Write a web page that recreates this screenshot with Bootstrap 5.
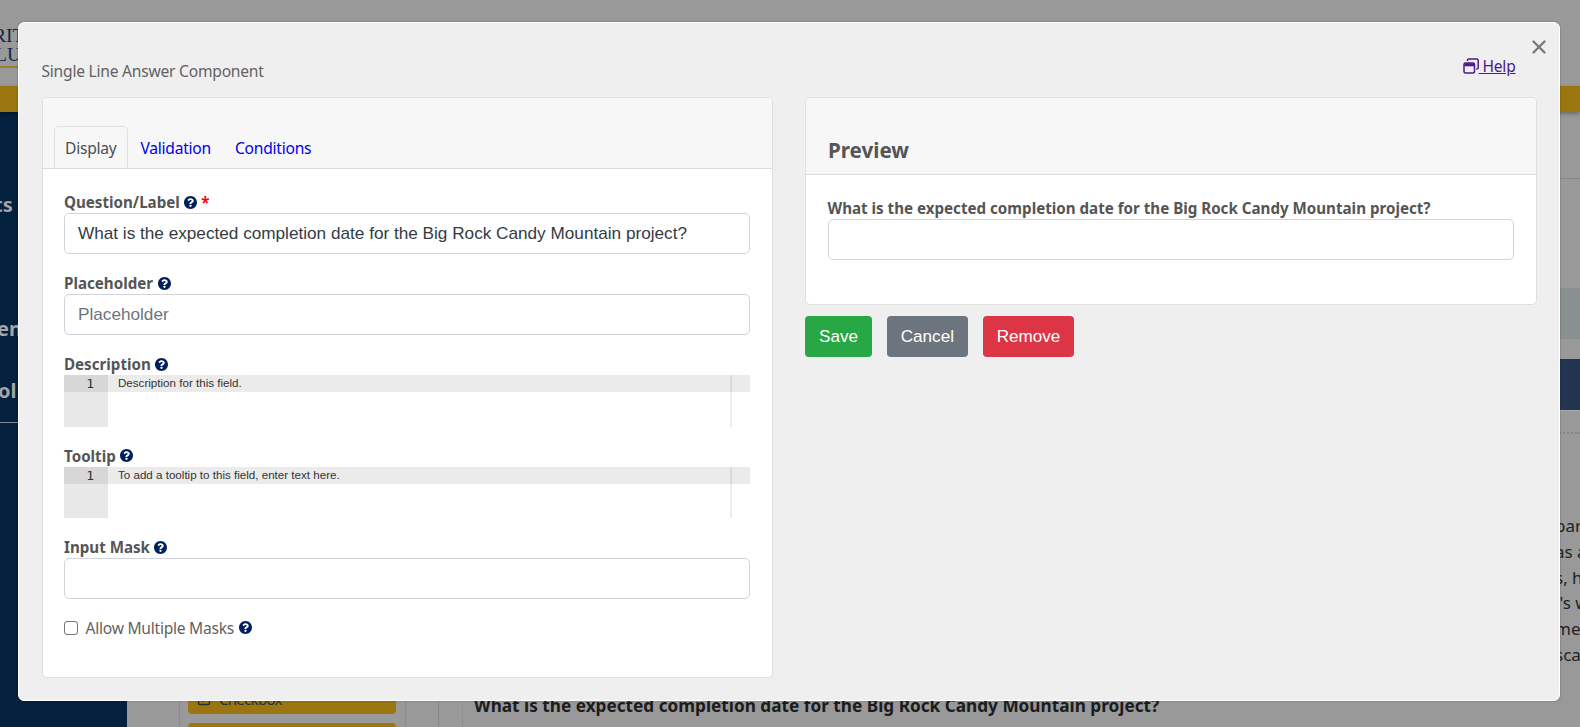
<!DOCTYPE html>
<html lang="en">
<head>
<meta charset="utf-8">
<meta name="viewport" content="width=device-width, initial-scale=1">
<title>Single Line Answer Component</title>
<link href="https://cdn.jsdelivr.net/npm/bootstrap@5.3.0/dist/css/bootstrap.min.css" rel="stylesheet">
<style>
body{font-family:"Noto Sans",sans-serif;font-size:15.15px;color:#555;background:#999;height:727px;overflow:hidden}
/* dimmed page behind the dialog */
.page-back{height:727px;overflow:hidden}
.brand-strip{height:86px;padding-top:27px}
.brand-text{width:60px;font:19.500px/18.500px "Liberation Serif",serif;color:#10234c;border-bottom:2px solid #a07c2c;height:41px;white-space:nowrap}
.gold-bar{height:26px;background:#9a7510;position:relative;box-shadow:0 2px 4px rgba(0,0,0,.3)}
.side-menu{width:127px;background:#04203f;color:#a3a5a8;font-weight:700;font-size:20px;line-height:28px;padding-top:79px;flex:none}
.side-menu div{white-space:nowrap}
.side-menu hr{margin:17px 0 0;border-color:#a3a5a8;opacity:.8}
.palette{width:227px;margin-left:52px;border:1px solid #8b8b8b;border-top:0;border-bottom:0;padding:562px 9px 0 8px;flex:none}
.palette-btn{height:40px;background:#9a7510;border-radius:4px;color:#26303b;font-size:15px;letter-spacing:-.7px;margin-bottom:9px;padding:10px 0 0 9px}
.form-canvas{border-left:1px solid #858585;margin-left:32px}
.drop-zone{margin-left:23px;border-left:1px dotted #858585;width:1080px;padding-top:582px;padding-left:11px;height:615px}
.drop-title{font-size:17.220px;font-weight:700;line-height:24px;color:#1c1c1c;white-space:nowrap}
.far-col{width:24px;flex:none;color:#222;white-space:nowrap;overflow:hidden}
.far-top{height:67px;border-bottom:1px solid #878787}
.far-grey{height:51px;margin-top:109px;background:#8a8f8f}
.far-navy{height:52px;margin-top:20px;background:#22344f;border-bottom:1px solid #aaa}
.far-dots{margin-top:21px;border-top:2px dotted #858585}
.far-text{margin-top:79px;font-size:17px;line-height:25.8px}
.far-text div{margin-left:-1px}
/* dialog */
.dialog-layer{position:absolute;inset:0;padding:22px 20px 26px 18px}
.dialog-box{height:679px;background:#efefef;border:1px solid #fff;border-radius:6px;box-shadow:0 0 2px rgba(0,0,0,.35);padding:0 22.500px 0 22.500px;position:relative}
.dialog-head{height:74px;padding-top:37px}
.dialog-title{color:#626262;font-size:15.600px;letter-spacing:-.23px}
.help-a{color:#4b1a8c;text-decoration:underline;margin-right:21px;margin-top:-5px;white-space:pre;font-size:15.600px;letter-spacing:-.25px}
.help-a svg{vertical-align:-2px}
.close-x{position:absolute;right:13px;top:17px;line-height:0;background:none;border:0;padding:0}
.panes{display:grid;grid-template-columns:731px 1fr;gap:32.500px;align-items:start}
.pane{border:1px solid #dfdfdf;border-radius:5px;background:#fff;overflow:hidden}
.pane-left{height:581px}
.pane-right{height:208px}
.pane-top{background:#f7f7f7;border-bottom:1px solid #dcdcdc}
.pane-left .pane-top{height:71px;padding:28px 11px 0}
.pane-right .pane-top{height:77px;padding:36px 22px 0;font-size:20.600px;font-weight:700;line-height:32px}
.tabs .nav-link{color:#0000ee;padding:0 11px;height:42px;line-height:42px;border:1px solid transparent;border-bottom:0;border-radius:5px 5px 0 0;font-size:15.600px;letter-spacing:-.24px}
.tabs .nav-link.active{color:#495057;background:#f7f7f7;border-color:#dee2e6;padding:0 10.900px 0 10.500px}
.pane-fill{padding:20px 22px 0 21.500px}
.fld{margin-bottom:16.100px}
.fld-lab{display:block;font-weight:700;line-height:26px;height:24px;white-space:nowrap}
.q{vertical-align:-1.500px;margin-left:4.500px;position:relative;top:-1px}
.req{color:#f00;margin-left:4px}
.fld .form-control,.form-control.solo{height:41px;font:17.180px "Liberation Sans",sans-serif;padding:0 13px;border:1px solid #ced4da;border-radius:5px;color:#333b42;background:#fff}
.fld .form-control::placeholder{color:#6c757d}
.editor{height:51.400px;display:grid;grid-template-columns:44px 1fr;background:#fff;position:relative}
.editor-gut{background:#e8e8e8}
.editor-num{height:17px;background:#d7d7d7;font:13px/17px "DejaVu Sans Mono",monospace;color:#333;text-align:right;padding-right:14px}
.editor-row{height:17px;background:#ebebeb;font:11.600px/16px "Liberation Sans",sans-serif;color:#333;padding-left:10px}
.editor::after{content:"";position:absolute;right:18px;top:0;bottom:0;width:2px;background:rgba(0,0,0,.07)}
.chk{width:14px;height:14px;border:1px solid #767676;border-radius:3px;background:#fff;margin-right:7.500px}
.chk-line{color:#626262;height:26px;font-size:15.600px;letter-spacing:-.25px}
.acts{gap:14.500px;margin-top:11px}
.act{font:17.100px/41px "Liberation Sans",sans-serif;height:41px;border:0;border-radius:4px;padding:0 14.100px;color:#fff}
.act-save{background:#28a745}.act-cancel{background:#6c757d}.act-remove{background:#dc3545}
</style>
</head>
<body>
<svg width="0" height="0" class="position-absolute"><defs>
<symbol id="qm" viewBox="8 8 496 496"><path fill="#00205b" d="M504 256c0 137-111 248-248 248S8 393 8 256 119 8 256 8s248 111 248 248zM262.700 90c-54.500 0-89.300 23-116.500 63.800-3.500 5.300-2.400 12.400 2.700 16.300l34.700 26.300c5.200 3.900 12.600 3 16.700-2.100 17.900-22.700 30.100-35.800 57.300-35.800 20.400 0 45.700 13.100 45.700 33 0 15-12.400 22.700-32.500 34C247.100 238.500 216 254.900 216 296v4c0 6.600 5.400 12 12 12h56c6.600 0 12-5.400 12-12v-1.300c0-28.500 83.200-29.600 83.200-106.700 0-58-60.200-102-116.500-102zM256 338c-25.400 0-46 20.600-46 46s20.600 46 46 46 46-20.600 46-46-20.600-46-46-46z"/></symbol>
</defs></svg>

<div class="page-back">
  <header class="brand-strip"><div class="brand-text"><div style="margin-left:-7px">RIT</div><div style="margin-left:-5px">LU</div></div></header>
  <div class="gold-bar"></div>
  <div class="d-flex" style="height:615px">
    <nav class="side-menu">
      <div style="margin-left:-6px">ts</div>
      <div style="margin:96px 0 0 -3px">en</div>
      <div style="margin:34px 0 0 -2px">ol</div>
      <hr>
    </nav>
    <div class="palette">
      <div class="palette-btn d-flex align-items-center"><svg width="14" height="14" viewBox="0 0 14 14" class="me-2"><rect x="1.500" y="1.500" width="11" height="11" rx="1.500" fill="none" stroke="#26303b" stroke-width="1.500"/><path d="M4 7l2.200 2.200L10 5" fill="none" stroke="#26303b" stroke-width="1.500"/></svg>Checkbox</div>
      <div class="palette-btn"></div>
    </div>
    <div class="form-canvas flex-grow-1">
      <div class="drop-zone"><div class="drop-title">What is the expected completion date for the Big Rock Candy Mountain project?</div></div>
    </div>
    <div class="far-col">
      <div class="far-top"></div><div class="far-grey"></div><div class="far-navy"></div><div class="far-dots"></div>
      <div class="far-text"><div>par</div><div>as a</div><div>s, h</div><div>&nbsp;'s w</div><div>me</div><div>sca</div></div>
    </div>
  </div>
</div>

<div class="dialog-layer">
  <div class="dialog-box" role="dialog">
    <button class="close-x" aria-label="Close"><svg width="14" height="14" viewBox="0 0 14 14"><path d="M1.500 1.500l11 11M12.500 1.500l-11 11" stroke="#777" stroke-width="2.300" stroke-linecap="round"/></svg></button>
    <div class="dialog-head d-flex justify-content-between align-items-start">
      <span class="dialog-title">Single Line Answer Component</span>
      <a class="help-a" href="#"><svg width="16" height="16" viewBox="0 0 16 16" fill="none" stroke="#4b1a8c" stroke-width="1.500"><rect x="1" y="5" width="10.500" height="10" rx="1.500"/><path d="M1.500 6.800h9.500" stroke-width="3"/><path d="M4.500 3V2.300C4.500 1.500 5 1 5.800 1h8c.8 0 1.400.5 1.400 1.300v7.400c0 .8-.6 1.400-1.400 1.400h-.6"/></svg> Help</a>
    </div>
    <div class="panes">
      <section class="pane pane-left">
        <div class="pane-top">
          <ul class="nav tabs">
            <li class="nav-item"><a class="nav-link active" href="#">Display</a></li>
            <li class="nav-item"><a class="nav-link" href="#">Validation</a></li>
            <li class="nav-item"><a class="nav-link" href="#">Conditions</a></li>
          </ul>
        </div>
        <div class="pane-fill">
          <div class="fld"><label class="fld-lab">Question/Label<svg class="q" width="13" height="13"><use href="#qm"/></svg><span class="req">*</span></label>
            <input class="form-control" value="What is the expected completion date for the Big Rock Candy Mountain project?"></div>
          <div class="fld"><label class="fld-lab">Placeholder<svg class="q" width="13" height="13"><use href="#qm"/></svg></label>
            <input class="form-control" placeholder="Placeholder"></div>
          <div class="fld"><label class="fld-lab">Description<svg class="q" width="13" height="13"><use href="#qm"/></svg></label>
            <div class="editor"><div class="editor-gut"><div class="editor-num">1</div></div><div><div class="editor-row">Description for this field.</div></div></div></div>
          <div class="fld"><label class="fld-lab">Tooltip<svg class="q" width="13" height="13"><use href="#qm"/></svg></label>
            <div class="editor"><div class="editor-gut"><div class="editor-num">1</div></div><div><div class="editor-row">To add a tooltip to this field, enter text here.</div></div></div></div>
          <div class="fld"><label class="fld-lab">Input Mask<svg class="q" width="13" height="13"><use href="#qm"/></svg></label>
            <input class="form-control"></div>
          <div class="d-flex align-items-center chk-line"><span class="chk"></span><span>Allow Multiple Masks<svg class="q" width="13" height="13"><use href="#qm"/></svg></span></div>
        </div>
      </section>
      <section>
        <div class="pane pane-right">
          <div class="pane-top">Preview</div>
          <div class="pane-fill">
            <label class="fld-lab">What is the expected completion date for the Big Rock Candy Mountain project?</label>
            <input class="form-control solo">
          </div>
        </div>
        <div class="d-flex acts">
          <button class="act act-save">Save</button><button class="act act-cancel">Cancel</button><button class="act act-remove">Remove</button>
        </div>
      </section>
    </div>
  </div>
</div>
<script src="https://cdn.jsdelivr.net/npm/bootstrap@5.3.0/dist/js/bootstrap.bundle.min.js"></script>
</body>
</html>
